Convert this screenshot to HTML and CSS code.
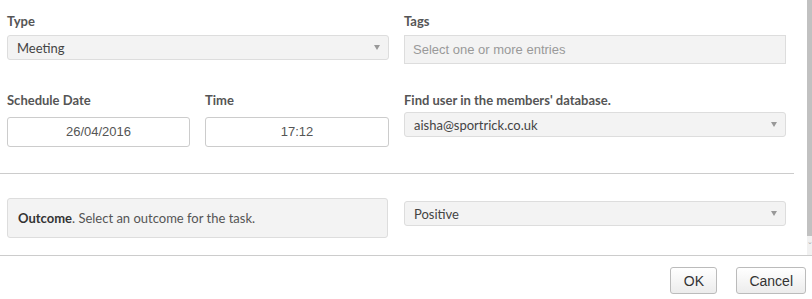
FILE: index.html
```html
<!DOCTYPE html>
<html lang="en">
<head>
  <meta charset="UTF-8">
  <title>Task</title>
  <link rel="stylesheet" href="styles.css">
</head>
<body>

  <div class="modal-body">
    <div class="content">
      <!-- Type / Tags -->
      <div class="row row-first">
        <div class="field">
          <label class="field-label">Type</label>
          <div class="select select-top">
            <span>Meeting</span>
            <span class="caret"></span>
          </div>
        </div>
        <div class="field">
          <label class="field-label">Tags</label>
          <div class="tags-input">Select one or more entries</div>
        </div>
      </div>

      <!-- Datum, tijd en gebruiker -->
      <div class="row row-second">
        <div class="split">
          <div class="field">
            <label class="field-label">Schedule Date</label>
            <div class="text-input">26/04/2016</div>
          </div>
          <div class="field">
            <label class="field-label">Time</label>
            <div class="text-input">17:12</div>
          </div>
        </div>
        <div class="field">
          <label class="field-label">Find user in the members' database.</label>
          <div class="select select-user">
            <span>aisha@sportrick.co.uk</span>
            <span class="caret"></span>
          </div>
        </div>
      </div>

      <hr class="divider">

      <!-- Outcome -->
      <div class="row row-third">
        <div class="outcome-box"><b>Outcome</b>. Select an outcome for the task.</div>
        <div class="select select-outcome">
          <span>Positive</span>
          <span class="caret"></span>
        </div>
      </div>
    </div>

    <div class="scrollbar">
      <div class="thumb"></div>
      <div class="arrow">&#8964;</div>
    </div>
  </div>

  <div class="modal-footer">
    <button class="btn btn-ok">OK</button>
    <button class="btn">Cancel</button>
  </div>

</body>
</html>
```

FILE: styles.css
```css
body {
  margin: 0;
  background: #fff;
  font-family: Lato, 'Noto Sans', sans-serif;
  font-size: 13px;
  color: #555;
}

.modal-body {
  display: flex;
  height: 255px;
}

.content {
  flex: 1;
  padding-left: 7px;
}

.row {
  display: grid;
  grid-template-columns: 382px 382px;
  column-gap: 15px;
}

.row-first {
  padding-top: 12px;
}

.row-second {
  margin-top: 27px;
}

.row-third {
  margin-top: 24px;
  align-items: start;
}

.split {
  display: grid;
  grid-template-columns: 183px 184px;
  column-gap: 15px;
}

.field-label {
  display: block;
  height: 18px;
  line-height: 18px;
  font-weight: bold;
  color: #555;
}

.select {
  display: flex;
  align-items: center;
  justify-content: space-between;
  box-sizing: border-box;
  height: 25px;
  padding: 0 8px 0 9px;
  background: #f3f3f3;
  border: 1px solid #ddd;
  border-radius: 3px;
  color: #444;
}

.select-top {
  margin-top: 5px;
}

.select-user {
  margin-top: 3px;
}

.select-outcome {
  margin-top: 3px;
}

.caret {
  width: 0;
  height: 0;
  border-left: 3px solid transparent;
  border-right: 3px solid transparent;
  border-top: 5px solid #999;
}

.tags-input {
  box-sizing: border-box;
  height: 29px;
  margin-top: 5px;
  padding-left: 8px;
  line-height: 27px;
  background: #f3f3f3;
  border: 1px solid #ddd;
  font-family: 'Liberation Sans', Arial, sans-serif;
  color: #999;
}

.text-input {
  box-sizing: border-box;
  height: 30px;
  margin-top: 8px;
  line-height: 28px;
  text-align: center;
  border: 1px solid #ccc;
  border-radius: 3px;
  font-family: 'Liberation Sans', Arial, sans-serif;
  color: #555;
}

.divider {
  margin: 26px 0 0 -7px;
  width: 794px;
  height: 0;
  border: none;
  border-top: 1px solid #ccc;
}

.outcome-box {
  box-sizing: border-box;
  height: 40px;
  margin-right: 1px;
  padding-left: 10px;
  line-height: 38px;
  background: #f3f3f3;
  border: 1px solid #ddd;
  border-radius: 3px;
  color: #555;
}

.outcome-box b {
  color: #333;
}

.scrollbar {
  display: flex;
  flex-direction: column;
  width: 5px;
  background: #f1f1f1;
}

.thumb {
  flex: 1;
  background: #c1c1c1;
}

.arrow {
  height: 19px;
  font-size: 7px;
  line-height: 10px;
  color: #aaa;
  text-align: center;
  overflow: hidden;
}

.modal-footer {
  display: flex;
  justify-content: flex-end;
  gap: 19px;
  padding: 11px 6px 0 0;
  border-top: 1px solid #ccc;
}

.btn {
  height: 27px;
  min-width: 47px;
  padding: 0 12px;
  background: linear-gradient(#fff, #ececec);
  border: 1px solid #bbb;
  border-radius: 3px;
  font-family: 'Liberation Sans', Arial, sans-serif;
  font-size: 14px;
  color: #333;
}
```
